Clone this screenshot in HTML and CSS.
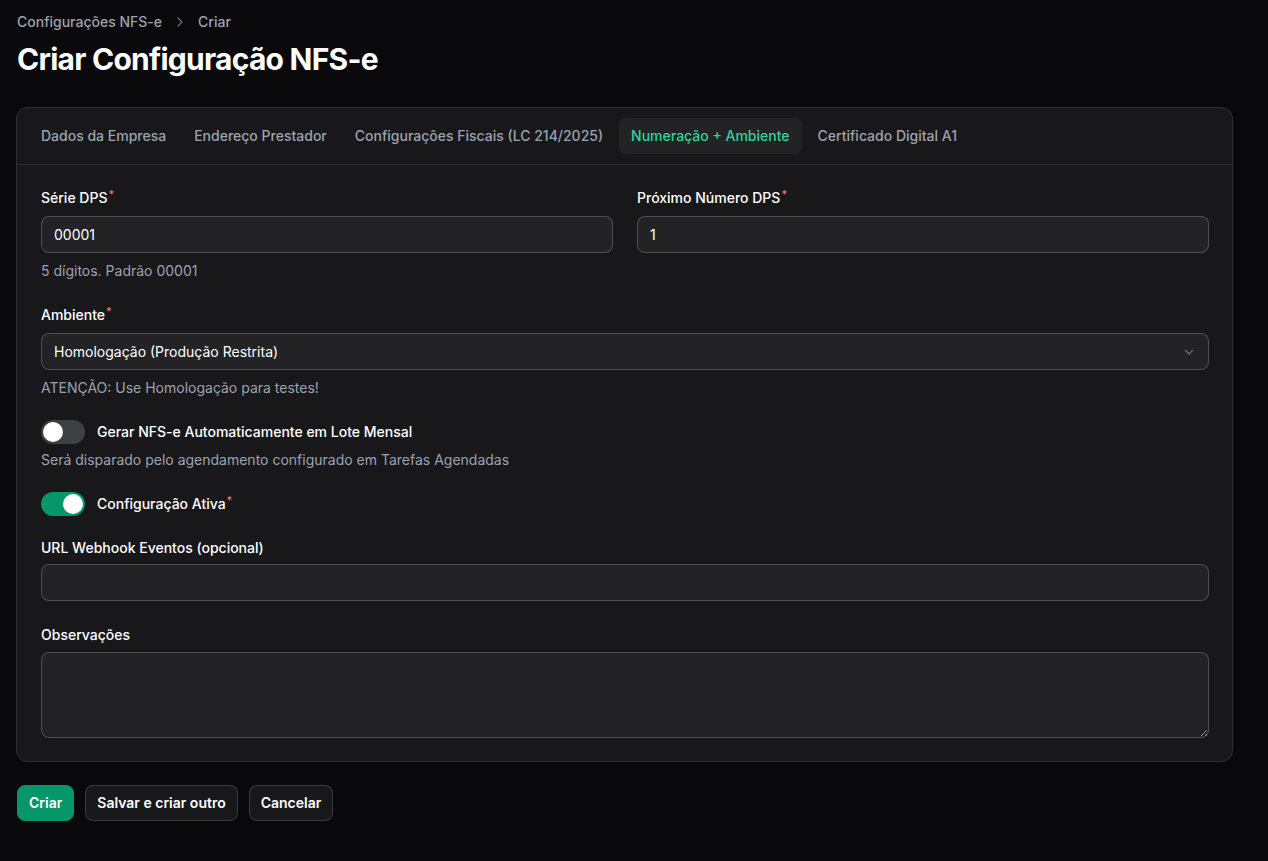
FILE: index.html
```html
<!DOCTYPE html>
<html lang="pt-BR">
<head>
<meta charset="UTF-8">
<meta name="viewport" content="width=device-width, initial-scale=1.0">
<title>Criar Configuração NFS-e</title>
<link rel="stylesheet" href="styles.css">
</head>
<body>
  <main class="page">
    <header class="page-header">
      <nav class="breadcrumbs">
        <a href="#">Configurações NFS-e</a>
        <svg class="crumb-sep" viewBox="0 0 20 20" width="20" height="20"><path d="M7.5 5l5 5-5 5" fill="none" stroke="currentColor" stroke-width="1.5" stroke-linecap="round" stroke-linejoin="round"/></svg>
        <span>Criar</span>
      </nav>
      <h1>Criar Configuração NFS-e</h1>
    </header>

    <form class="card">
      <div class="tabs">
        <button type="button" class="tab">Dados da Empresa</button>
        <button type="button" class="tab">Endereço Prestador</button>
        <button type="button" class="tab">Configurações Fiscais (LC 214/2025)</button>
        <button type="button" class="tab active">Numeração + Ambiente</button>
        <button type="button" class="tab">Certificado Digital A1</button>
      </div>

      <div class="fields">
        <div class="row-2">
          <div class="field">
            <label for="serie">Série DPS<sup>*</sup></label>
            <input id="serie" class="input" type="text" value="00001">
            <p class="hint">5 dígitos. Padrão 00001</p>
          </div>
          <div class="field">
            <label for="numero">Próximo Número DPS<sup>*</sup></label>
            <input id="numero" class="input" type="text" value="1">
          </div>
        </div>

        <div class="field">
          <label for="ambiente">Ambiente<sup>*</sup></label>
          <div class="select-wrap">
            <select id="ambiente" class="input select">
              <option>Homologação (Produção Restrita)</option>
              <option>Produção</option>
            </select>
            <svg class="chevron" viewBox="0 0 20 20" width="16" height="16"><path d="M5.5 8l4.5 4.5L14.5 8" fill="none" stroke="currentColor" stroke-width="1.6" stroke-linecap="round" stroke-linejoin="round"/></svg>
          </div>
          <p class="hint">ATENÇÃO: Use Homologação para testes!</p>
        </div>

        <div class="field toggle-field">
          <div class="toggle-row">
            <span class="toggle"><span class="knob"></span></span>
            <span class="toggle-label">Gerar NFS-e Automaticamente em Lote Mensal</span>
          </div>
          <p class="hint">Será disparado pelo agendamento configurado em Tarefas Agendadas</p>
        </div>

        <div class="field toggle-field">
          <div class="toggle-row">
            <span class="toggle on"><span class="knob"></span></span>
            <span class="toggle-label">Configuração Ativa<sup>*</sup></span>
          </div>
        </div>

        <div class="field after-toggle">
          <label for="webhook">URL Webhook Eventos (opcional)</label>
          <input id="webhook" class="input" type="text">
        </div>

        <div class="field tight">
          <label for="obs">Observações</label>
          <textarea id="obs" class="input textarea"></textarea>
        </div>
      </div>
    </form>

    <div class="actions">
      <button type="button" class="btn primary">Criar</button>
      <button type="button" class="btn">Salvar e criar outro</button>
      <button type="button" class="btn">Cancelar</button>
    </div>
  </main>
</body>
</html>
```

FILE: styles.css
```css
/* Filament-like dark form */
body {
  margin: 0;
  padding: 0;
  background-color: #09090b;
  color: #fff;
  font-family: Inter, "Noto Sans", sans-serif;
  font-size: 14px;
  line-height: 20px;
}

.page {
  width: 1217px;
  padding: 12px 0 40px 16px;
}

.breadcrumbs {
  display: flex;
  align-items: center;
  gap: 10px;
  color: #9ca3af;
  font-weight: 500;
  padding-left: 1px;
}

.breadcrumbs a {
  color: #9ca3af;
  text-decoration: none;
}

.crumb-sep {
  width: 16px;
  height: 16px;
  color: #6b7280;
}

.page-header h1 {
  margin: 9px 0 0 1px;
  font-size: 30px;
  line-height: 36px;
  font-weight: 700;
  letter-spacing: -0.75px;
}

.card {
  margin-top: 30px;
  background-color: #18181b;
  border: 1px solid rgba(255, 255, 255, 0.1);
  border-radius: 12px;
}

.tabs {
  display: flex;
  gap: 4px;
  padding: 10px 12px;
  border-bottom: 1px solid rgba(255, 255, 255, 0.1);
}

.tab {
  font-family: inherit;
  font-size: 14px;
  line-height: 20px;
  font-weight: 500;
  color: #9ca3af;
  background: none;
  border: none;
  border-radius: 8px;
  padding: 8px 12px;
  cursor: pointer;
}

.tab.active {
  background-color: rgba(255, 255, 255, 0.05);
  color: #34d399;
}

.fields {
  display: flex;
  flex-direction: column;
  gap: 24px;
  padding: 23px 23px 23px 24px;
}

.row-2 {
  display: grid;
  grid-template-columns: 1fr 1fr;
  gap: 24px;
}

.field {
  display: flex;
  flex-direction: column;
  gap: 8px;
}

.toggle-field {
  gap: 6px;
  margin-top: -2px;
}

.field.after-toggle {
  margin-top: -2px;
  gap: 6px;
}

.field.tight {
  gap: 7px;
}

.field label,
.toggle-label {
  font-weight: 500;
  color: #fff;
  line-height: 20px;
}

sup {
  position: relative;
  top: -5px;
  vertical-align: baseline;
  color: #f87171;
  font-size: 11px;
  line-height: 0;
  margin-left: 1px;
  font-weight: 500;
}

.input {
  box-sizing: border-box;
  width: 100%;
  height: 37px;
  padding: 8px 12px;
  font-family: inherit;
  font-size: 14px;
  line-height: 20px;
  color: #fff;
  background-color: rgba(255, 255, 255, 0.05);
  border: 1px solid rgba(255, 255, 255, 0.2);
  border-radius: 8px;
  outline: none;
}

.select-wrap {
  position: relative;
  display: flex;
}

.select {
  appearance: none;
  -webkit-appearance: none;
  background-color: #232326;
}

.chevron {
  position: absolute;
  right: 12px;
  top: 11px;
  color: #6b7280;
  pointer-events: none;
}

.textarea {
  display: block;
  height: 86px;
  resize: vertical;
}

.hint {
  margin: 0;
  color: #9ca3af;
}

.toggle-row {
  display: flex;
  align-items: center;
  gap: 12px;
}

.toggle {
  display: inline-flex;
  align-items: center;
  width: 44px;
  height: 24px;
  box-sizing: border-box;
  padding: 2px;
  border-radius: 12px;
  background-color: #3f3f46;
}

.toggle .knob {
  width: 20px;
  height: 20px;
  border-radius: 50%;
  background-color: #fff;
}

.toggle.on {
  background-color: #059669;
  justify-content: flex-end;
}

.actions {
  display: flex;
  gap: 11px;
  margin-top: 23px;
  padding-left: 1px;
}

.btn {
  font-family: inherit;
  font-size: 14px;
  line-height: 20px;
  font-weight: 600;
  color: #fff;
  background-color: #18181b;
  border: 1px solid rgba(255, 255, 255, 0.15);
  border-radius: 8px;
  padding: 7px 11px;
  cursor: pointer;
}

.btn.primary {
  background-color: #059669;
  border-color: #059669;
}
```
